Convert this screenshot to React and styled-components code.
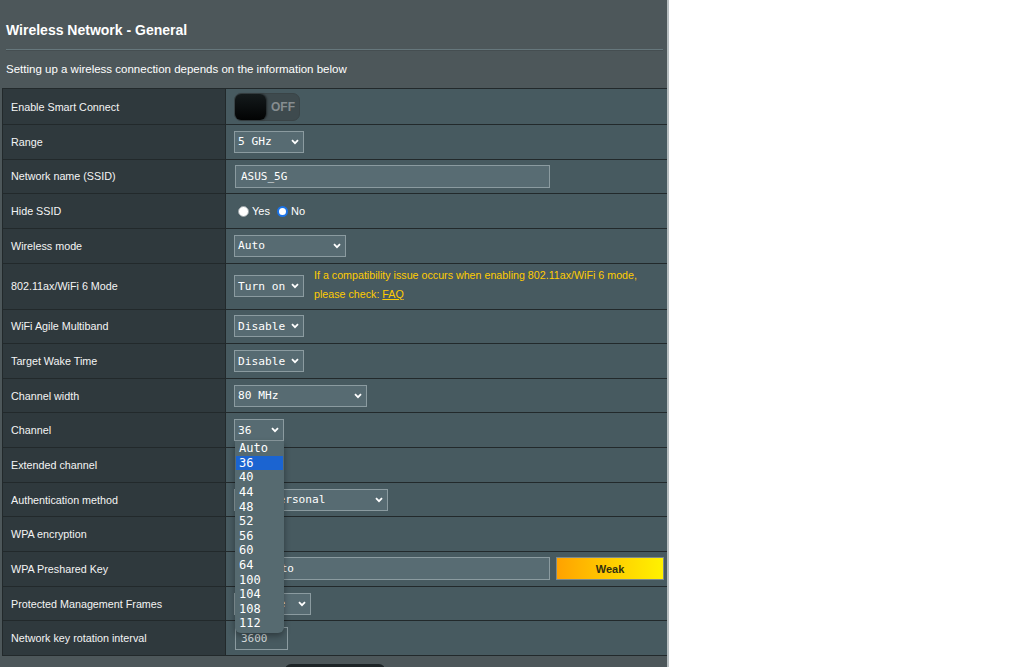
import React from 'react';
import styled, { createGlobalStyle } from 'styled-components';

const GlobalStyle = createGlobalStyle`
  html, body {
    margin: 0;
    padding: 0;
    background: #ffffff;
    font-family: "Liberation Sans", Arial, sans-serif;
  }
`;

const Panel = styled.div`
  width: 669px;
  height: 667px;
  overflow: hidden;
  background: #4d575a;
  border-right: 2px solid #b7bec0;
  padding-left: 2px;
  box-sizing: border-box;
`;

const Header = styled.div`
  padding: 20px 4px 0 4px;
`;

const Title = styled.div`
  font-size: 14px;
  line-height: 20px;
  font-weight: bold;
  color: #ffffff;
`;

const Divider = styled.div`
  height: 1px;
  margin: 9px 0 0;
  background: #66777c;
  border-bottom: 1px solid #454e51;
`;

const Subtitle = styled.div`
  margin-top: 10px;
  font-size: 11.5px;
  line-height: 16px;
  color: #ffffff;
`;

const Table = styled.div`
  margin-top: 11px;
  border-top: 1px solid #22292b;
  border-left: 1px solid #22292b;
`;

const Row = styled.div`
  display: grid;
  grid-template-columns: 223px 1fr;
  height: ${({ tall, first }) => (tall ? '45px' : first ? '35px' : '33.65px')};
  border-bottom: 1px solid #22292b;
`;

const Label = styled.div`
  display: flex;
  align-items: center;
  padding-left: 8px;
  background: #2f393d;
  border-right: 1px solid #22292b;
  font-size: 10.75px;
  color: #f4f4f4;
`;

const Value = styled.div`
  position: relative;
  display: flex;
  align-items: center;
  gap: 10px;
  padding-left: 8px;
  background: #475a60;
`;

const Toggle = styled.div`
  display: flex;
  align-items: center;
  width: 64px;
  height: 26px;
  border-radius: 7px;
  background: #3e4a4e;
  border: 1px solid #3a4447;
`;

const Knob = styled.div`
  width: 31px;
  height: 26px;
  border-radius: 6px;
  background: linear-gradient(180deg, #141a1c 0%, #020303 100%);
  box-shadow: 1px 0 2px rgba(0, 0, 0, 0.5);
`;

const ToggleText = styled.span`
  margin-left: 5px;
  font-size: 12px;
  font-weight: bold;
  color: #868d90;
`;

const SelectBox = styled.div`
  position: relative;
  display: flex;
  align-items: center;
  justify-content: space-between;
  box-sizing: border-box;
  width: ${({ width }) => width}px;
  height: 22px;
  padding: 0 4px 0 3px;
  background: #576b72;
  border: 1px solid #8b9ba0;
  font-family: "DejaVu Sans Mono", "Liberation Mono", monospace;
  font-size: 11.2px;
  color: #ffffff;
  white-space: pre;
`;

const TextInput = styled.div`
  display: flex;
  align-items: center;
  box-sizing: border-box;
  width: ${({ width }) => width}px;
  height: 23px;
  padding-left: 5px;
  background: ${({ plain }) => (plain ? 'transparent' : '#586c73')};
  border: 1px solid #8b9ba0;
  font-family: "DejaVu Sans Mono", "Liberation Mono", monospace;
  font-size: 11px;
  color: ${({ plain }) => (plain ? '#d8dddf' : '#ffffff')};
  margin-left: 1px;
`;

const RadioGroup = styled.div`
  display: flex;
  align-items: center;
  font-size: 11px;
  color: #ffffff;
`;

const RadioDot = styled.span`
  display: inline-block;
  box-sizing: border-box;
  width: 11px;
  height: 11px;
  margin: 0 3px 0 ${({ first }) => (first ? '4px' : '7px')};
  border-radius: 50%;
  background: #ffffff;
  border: ${({ checked }) => (checked ? '2px solid #1a73e8' : '1px solid #9aa3a6')};
`;

const Note = styled.div`
  font-size: 10.7px;
  line-height: 19px;
  color: #ffcc00;
  margin-top: -2px;
`;

const FaqLink = styled.a`
  color: #ffcc00;
  text-decoration: underline;
`;

const Strength = styled.div`
  display: flex;
  align-items: center;
  justify-content: center;
  box-sizing: border-box;
  width: 108px;
  height: 23px;
  margin-left: -4px;
  background: linear-gradient(90deg, #ffa200 0%, #ffd000 55%, #fff200 100%);
  border: 1px solid #7d8a8e;
  font-size: 11px;
  font-weight: bold;
  color: #33300f;
`;

const Dropdown = styled.div`
  position: absolute;
  top: 100%;
  left: 0;
  width: 49px;
  margin-top: 1px;
  padding-bottom: 2px;
  background: #566a70;
  border-radius: 0 0 6px 6px;
  box-shadow: 0 3px 6px rgba(0, 0, 0, 0.35);
  z-index: 5;
`;

const Option = styled.div`
  height: 14.6px;
  line-height: 14.6px;
  padding-left: 3px;
  font-family: "DejaVu Sans Mono", "Liberation Mono", monospace;
  font-size: 12px;
  color: #ffffff;
  background: ${({ active }) => (active ? '#1b64d1' : 'transparent')};
  margin: 0 1px;
`;

const Footer = styled.div`
  display: flex;
  justify-content: center;
  padding-top: 8px;
`;

const ApplyButton = styled.div`
  width: 100px;
  height: 20px;
  border-radius: 6px;
  background: #1d2426;
`;

const Chevron = () => (
  <svg width="8" height="6" viewBox="0 0 8 6">
    <path d="M1 1.2l3 3 3-3" fill="none" stroke="#ffffff" strokeWidth="1.8" />
  </svg>
);

const Select = ({ value, width, children }) => (
  <SelectBox width={width}>
    <span>{value}</span>
    <Chevron />
    {children}
  </SelectBox>
);

const channels = ['Auto', '36', '40', '44', '48', '52', '56', '60', '64', '100', '104', '108', '112'];

export default function App() {
  return (
    <>
      <GlobalStyle />
      <Panel>
        <Header>
          <Title>Wireless Network - General</Title>
          <Divider />
          <Subtitle>Setting up a wireless connection depends on the information below</Subtitle>
        </Header>
        <Table>
          <Row first>
            <Label>Enable Smart Connect</Label>
            <Value>
              <Toggle>
                <Knob />
                <ToggleText>OFF</ToggleText>
              </Toggle>
            </Value>
          </Row>
          <Row>
            <Label>Range</Label>
            <Value>
              <Select value="5 GHz" width={70} />
            </Value>
          </Row>
          <Row>
            <Label>Network name (SSID)</Label>
            <Value>
              <TextInput width={315}>ASUS_5G</TextInput>
            </Value>
          </Row>
          <Row>
            <Label>Hide SSID</Label>
            <Value>
              <RadioGroup>
                <RadioDot first />
                Yes
                <RadioDot checked />
                No
              </RadioGroup>
            </Value>
          </Row>
          <Row>
            <Label>Wireless mode</Label>
            <Value>
              <Select value="Auto" width={112} />
            </Value>
          </Row>
          <Row tall>
            <Label>802.11ax/WiFi 6 Mode</Label>
            <Value>
              <Select value="Turn on" width={70} />
              <Note>
                If a compatibility issue occurs when enabling 802.11ax/WiFi 6 mode,
                <br />
                please check: <FaqLink>FAQ</FaqLink>
              </Note>
            </Value>
          </Row>
          <Row>
            <Label>WiFi Agile Multiband</Label>
            <Value>
              <Select value="Disable" width={70} />
            </Value>
          </Row>
          <Row>
            <Label>Target Wake Time</Label>
            <Value>
              <Select value="Disable" width={70} />
            </Value>
          </Row>
          <Row>
            <Label>Channel width</Label>
            <Value>
              <Select value="80 MHz" width={133} />
            </Value>
          </Row>
          <Row>
            <Label>Channel</Label>
            <Value>
              <Select value="36" width={50}>
                <Dropdown>
                  {channels.map(ch => (
                    <Option key={ch} active={ch === '36'}>
                      {ch}
                    </Option>
                  ))}
                </Dropdown>
              </Select>
            </Value>
          </Row>
          <Row>
            <Label>Extended channel</Label>
            <Value />
          </Row>
          <Row>
            <Label>Authentication method</Label>
            <Value>
              <Select value="WPA2-Personal" width={154} />
            </Value>
          </Row>
          <Row>
            <Label>WPA encryption</Label>
            <Value />
          </Row>
          <Row>
            <Label>WPA Preshared Key</Label>
            <Value>
              <TextInput width={315}>wifi12to</TextInput>
              <Strength>Weak</Strength>
            </Value>
          </Row>
          <Row>
            <Label>Protected Management Frames</Label>
            <Value>
              <Select value="Capable" width={77} />
            </Value>
          </Row>
          <Row>
            <Label>Network key rotation interval</Label>
            <Value>
              <TextInput width={53} plain>3600</TextInput>
            </Value>
          </Row>
        </Table>
        <Footer>
          <ApplyButton />
        </Footer>
      </Panel>
    </>
  );
}
